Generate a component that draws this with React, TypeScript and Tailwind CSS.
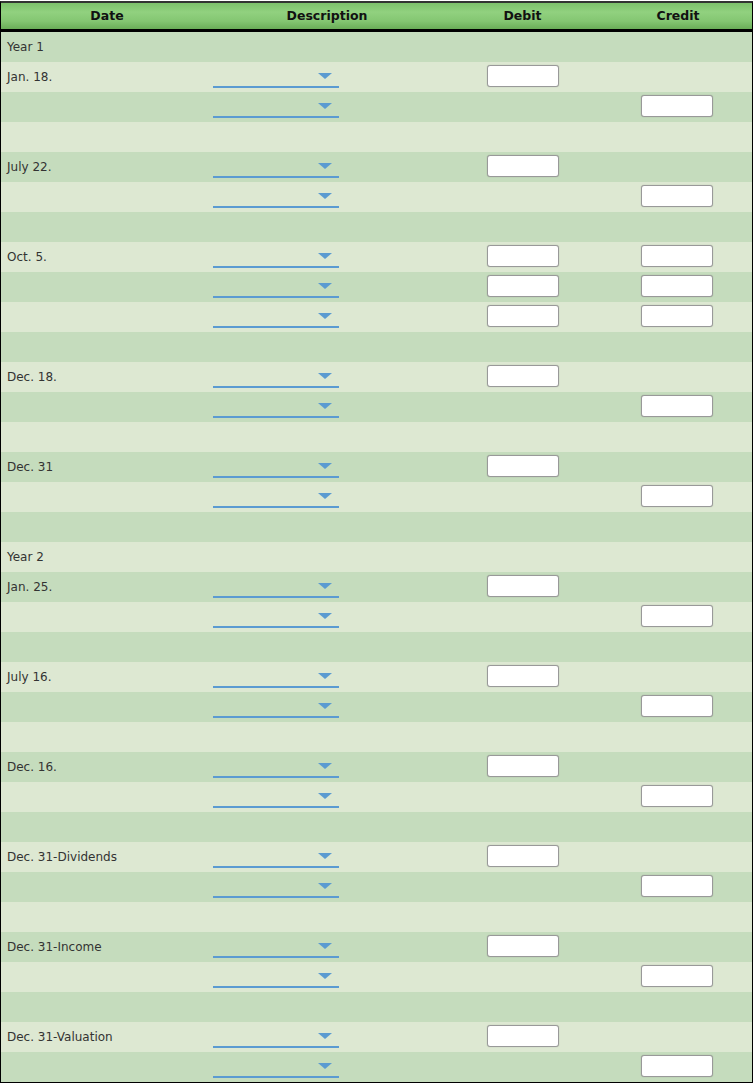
import React from "react";

type Row = { date?: string; drop?: boolean; debit?: boolean; credit?: boolean };

// Journal rows, top to bottom
const rows: Row[] = [
  { date: "Year 1" },
  { date: "Jan. 18.", drop: true, debit: true },
  { drop: true, credit: true },
  {},
  { date: "July 22.", drop: true, debit: true },
  { drop: true, credit: true },
  {},
  { date: "Oct. 5.", drop: true, debit: true, credit: true },
  { drop: true, debit: true, credit: true },
  { drop: true, debit: true, credit: true },
  {},
  { date: "Dec. 18.", drop: true, debit: true },
  { drop: true, credit: true },
  {},
  { date: "Dec. 31", drop: true, debit: true },
  { drop: true, credit: true },
  {},
  { date: "Year 2" },
  { date: "Jan. 25.", drop: true, debit: true },
  { drop: true, credit: true },
  {},
  { date: "July 16.", drop: true, debit: true },
  { drop: true, credit: true },
  {},
  { date: "Dec. 16.", drop: true, debit: true },
  { drop: true, credit: true },
  {},
  { date: "Dec. 31-Dividends", drop: true, debit: true },
  { drop: true, credit: true },
  {},
  { date: "Dec. 31-Income", drop: true, debit: true },
  { drop: true, credit: true },
  {},
  { date: "Dec. 31-Valuation", drop: true, debit: true },
  { drop: true, credit: true },
];

function Dropdown() {
  return (
    <div className="relative mt-[11px] h-[15px] w-[126px] border-b-2 border-[#5b9bd1]">
      <svg
        className="absolute right-[7px] top-0"
        width="14"
        height="6"
        viewBox="0 0 14 6"
      >
        <polygon points="0,0 14,0 7,6" fill="#5b9bd1" />
      </svg>
    </div>
  );
}

function Amount() {
  return (
    <div className="mt-[3px] h-[22px] w-[72px] rounded-[3px] border border-[#999] bg-white shadow-[0_0_1px_rgba(0,0,0,0.3)]" />
  );
}

export default function App() {
  return (
    <div className="pt-px font-['DejaVu_Sans',Verdana,sans-serif]">
      <div className="w-[753px] border-x border-b border-t-2 border-x-black border-b-black border-t-[#333]">
        {/* Header */}
        <div className="grid h-[29px] grid-cols-[212px_228px_163px_1fr] border-b-[3px] border-black bg-[linear-gradient(#7dc16c,#91d17f_35%,#84c672_70%,#6aad58)] text-[12.5px] font-bold leading-[25px] text-[#111]">
          <div className="text-center">Date</div>
          <div className="text-center">Description</div>
          <div className="text-center">Debit</div>
          <div className="text-center">Credit</div>
        </div>

        {/* Body */}
        {rows.map((r, i) => (
          <div
            key={i}
            className={`grid h-[30px] grid-cols-[212px_228px_163px_1fr] ${
              i % 2 === 0 ? "bg-[#c5dcbd]" : "bg-[#dde8d2]"
            }`}
          >
            <div className="pl-[6px] pt-[8px] text-[12px] leading-[14px] text-[#333]">
              {r.date}
            </div>
            <div>{r.drop && <Dropdown />}</div>
            <div className="flex justify-center">{r.debit && <Amount />}</div>
            <div className="flex justify-center pr-[2px]">{r.credit && <Amount />}</div>
          </div>
        ))}
      </div>
    </div>
  );
}
